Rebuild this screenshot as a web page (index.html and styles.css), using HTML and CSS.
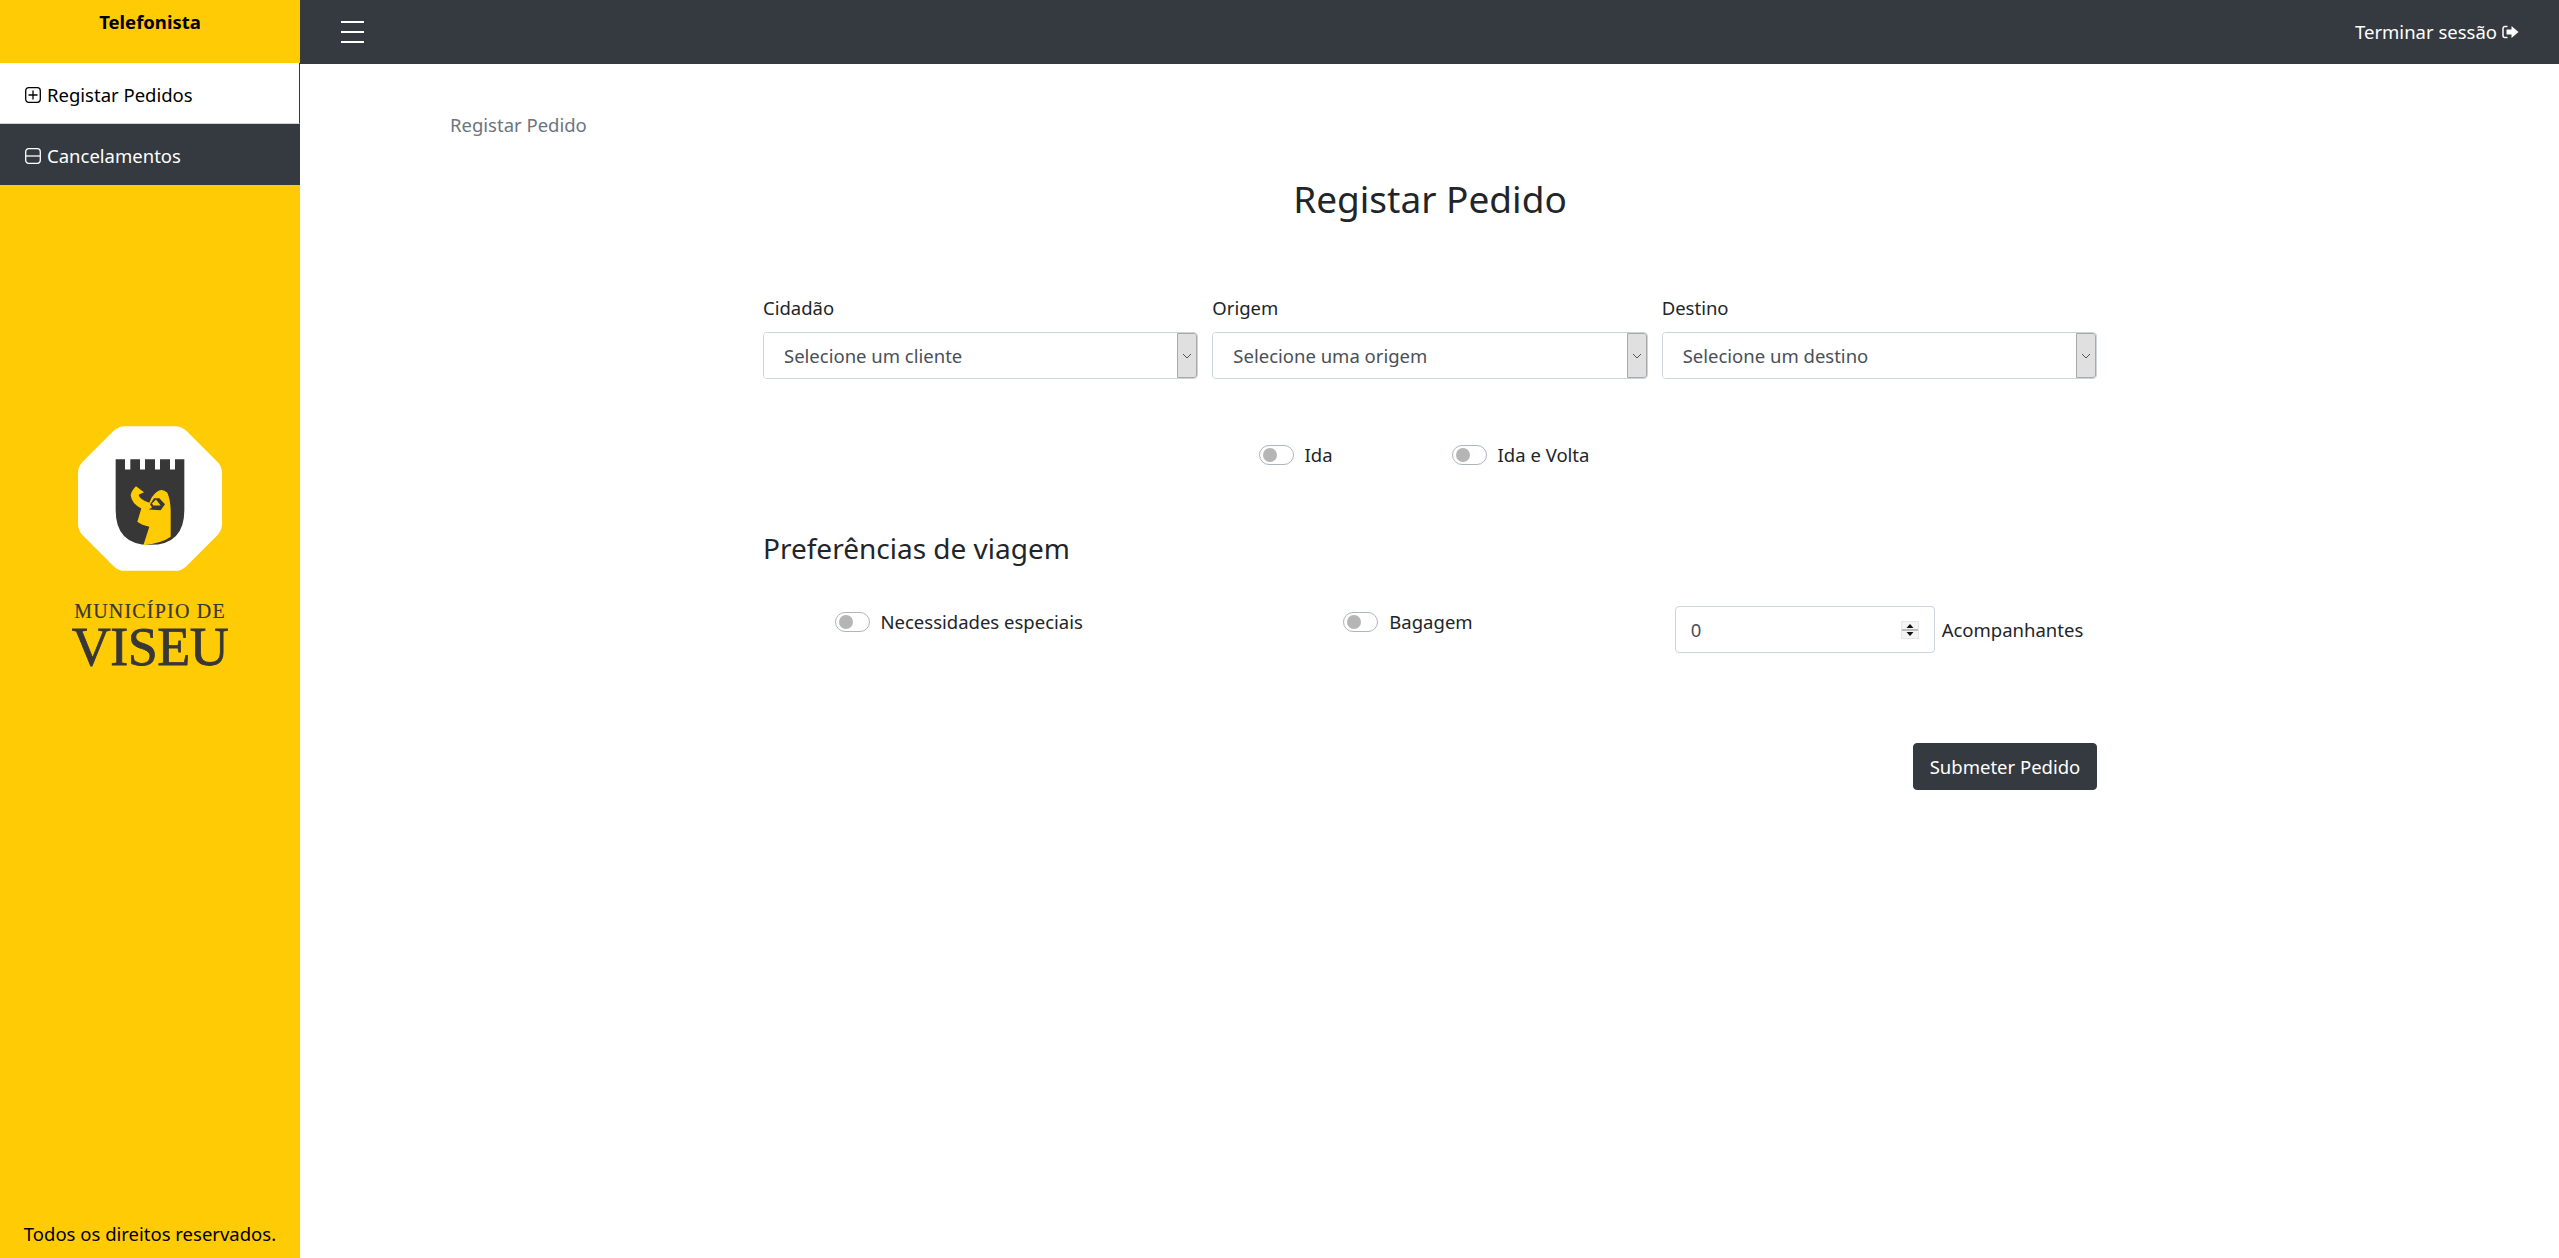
FILE: index.html
```html
<!DOCTYPE html>
<html lang="pt">
<head>
    <meta charset="UTF-8">
    <meta name="viewport" content="width=device-width, initial-scale=1.0">
    <title>Registar Pedido</title>
    <link rel="stylesheet" href="styles.css">
</head>
<body>
    <aside class="sidebar">
        <div class="sidebar-title">Telefonista</div>
        <a class="side-link active" href="#">
            <svg class="side-icon" viewBox="0 0 16 16"><rect x=".7" y=".7" width="14.600" height="14.600" rx="3" fill="none" stroke="currentColor" stroke-width="1.300"/><path d="M8 3.500v9M3.500 8h9" stroke="currentColor" stroke-width="1.300"/></svg>
            Registar Pedidos
        </a>
        <a class="side-link" href="#">
            <svg class="side-icon" viewBox="0 0 16 16"><rect x=".7" y=".7" width="14.600" height="14.600" rx="3" fill="none" stroke="currentColor" stroke-width="1.300"/><path d="M1 8h14" stroke="currentColor" stroke-width="1.300"/></svg>
            Cancelamentos
        </a>
        <div class="brand">
            <svg class="brand-mark" viewBox="84 48 432 434">
                <path fill="#fff" d="M225 48H375Q395 48 409 62L502 155Q516 169 516 189V341Q516 361 502 375L409 468Q395 482 375 482H225Q205 482 191 468L98 375Q84 361 84 341V189Q84 169 98 155L191 62Q205 48 225 48Z"/>
                <path fill="#373737" d="M197 147H225V178H241V147H270V178H285V147H315V178H330V147H360V178H375V147H403V300Q403 404 300 404Q197 404 197 300Z"/>
                <path fill="#ffcb05" d="M258 228L282 246L266 254Q268 268 298 278L305 262Q330 225 352 248Q362 270 362 305V380Q335 400 280 405L298 350Q275 345 262 335L274 295Q245 280 242 255Q245 240 258 228Z"/>
                <path fill="#373737" d="M312 264L300 282L306 292L296 298L332 300L345 282L328 264Z"/>
                <path fill="#ffcb05" d="M318 268L332 286L310 286L306 280Z"/>
            </svg>
            <div class="brand-small">MUNICÍPIO DE</div>
            <div class="brand-big">VISEU</div>
        </div>
        <div class="side-footer">Todos os direitos reservados.</div>
    </aside>

    <div class="page">
        <nav class="topbar">
            <button class="menu-btn" aria-label="Menu"><span></span><span></span><span></span></button>
            <a class="logout" href="#">Terminar sessão
                <svg class="logout-icon" viewBox="0 0 17 14"><path d="M5.500 1.500H3A2 2 0 0 0 1 3.500v7a2 2 0 0 0 2 2h2.500" fill="none" stroke="currentColor" stroke-width="1.500"/><path d="M9.500 1l7 6-7 6V9.500H4.500v-5h5z" fill="currentColor"/></svg>
            </a>
        </nav>

        <main class="content">
            <div class="breadcrumb">Registar Pedido</div>
            <form class="order-form">
                <h2 class="form-title">Registar Pedido</h2>

                <div class="select-row">
                    <div class="field">
                        <label for="cidadao">Cidadão</label>
                        <div class="select-box">
                            <select id="cidadao"><option>Selecione um cliente</option></select>
                            <span class="select-arrow"><svg viewBox="0 0 10 6"><path d="M1 1l4 4 4-4" fill="none" stroke="#555" stroke-width="1"/></svg></span>
                        </div>
                    </div>
                    <div class="field">
                        <label for="origem">Origem</label>
                        <div class="select-box">
                            <select id="origem"><option>Selecione uma origem</option></select>
                            <span class="select-arrow"><svg viewBox="0 0 10 6"><path d="M1 1l4 4 4-4" fill="none" stroke="#555" stroke-width="1"/></svg></span>
                        </div>
                    </div>
                    <div class="field">
                        <label for="destino">Destino</label>
                        <div class="select-box">
                            <select id="destino"><option>Selecione um destino</option></select>
                            <span class="select-arrow"><svg viewBox="0 0 10 6"><path d="M1 1l4 4 4-4" fill="none" stroke="#555" stroke-width="1"/></svg></span>
                        </div>
                    </div>
                </div>

                <div class="trip-row">
                    <label class="toggle toggle-ida"><span class="switch"></span>Ida</label>
                    <label class="toggle"><span class="switch"></span>Ida e Volta</label>
                </div>

                <h3 class="prefs-title">Preferências de viagem</h3>

                <div class="prefs-row">
                    <div class="pref-cell"><label class="toggle"><span class="switch"></span>Necessidades especiais</label></div>
                    <div class="pref-cell"><label class="toggle"><span class="switch"></span>Bagagem</label></div>
                    <div class="pref-number">
                        <div class="number-box">
                            <input type="number" value="0" min="0" id="acompanhantes">
                            <span class="spinner">
                                <svg viewBox="0 0 18 18">
                                    <rect width="18" height="18" fill="#e6e6e6"/>
                                    <rect x="1" y="1" width="16" height="16" fill="#f4f4f4"/>
                                    <path d="M1 9h16" stroke="#bbb" stroke-width="2"/>
                                    <path d="M9 3l3.500 4h-7zM9 15l3.500-4h-7z" fill="#111"/>
                                </svg>
                            </span>
                        </div>
                        <label for="acompanhantes">Acompanhantes</label>
                    </div>
                </div>

                <div class="form-actions">
                    <button type="button" class="submit-btn">Submeter Pedido</button>
                </div>
            </form>
        </main>
    </div>
</body>
</html>
```

FILE: styles.css
```css
* {
    box-sizing: border-box;
}

html, body {
    height: 100%;
}

body {
    margin: 0;
    display: flex;
    min-height: 1258px;
    font-family: "Noto Sans", "Open Sans", sans-serif;
    font-size: 18.5px;
    line-height: 24px;
    color: #212529;
    background-color: #fff;
    overflow: hidden;
}

/* Sidebar */
.sidebar {
    width: 300px;
    flex-shrink: 0;
    display: flex;
    flex-direction: column;
    background-color: #ffcb05;
}

.sidebar-title {
    height: 63px;
    padding-top: 10px;
    text-align: center;
    font-weight: bold;
    color: #000;
}

.side-link {
    display: flex;
    align-items: center;
    gap: 6px;
    height: 61px;
    padding: 2px 0 0 25px;
    color: #fff;
    text-decoration: none;
    background-color: #343a40;
}

.side-link.active {
    height: 61px;
    padding-top: 3px;
    color: #000;
    background-color: #fff;
    border-right: 1px solid #343a40;
    border-bottom: 1px solid #ced4da;
}

.side-icon {
    width: 16px;
    height: 16px;
}

.brand {
    margin-top: 241px;
    display: flex;
    flex-direction: column;
    align-items: center;
    color: #373737;
    font-family: "Liberation Serif", serif;
}

.brand-mark {
    width: 144px;
    height: 145px;
}

.brand-small {
    margin-top: 28px;
    font-size: 20px;
    line-height: 24px;
    letter-spacing: 1.2px;
    -webkit-text-stroke: 0.2px #373737;
}

.brand-big {
    font-size: 54px;
    line-height: 48px;
    letter-spacing: -0.5px;
    -webkit-text-stroke: 0.8px #373737;
}

.side-footer {
    margin-top: auto;
    padding-bottom: 12px;
    text-align: center;
    color: #000;
}

/* Top bar */
.page {
    flex: 1;
    display: flex;
    flex-direction: column;
}

.topbar {
    height: 64px;
    display: flex;
    align-items: center;
    justify-content: space-between;
    padding: 0 40px 0 41px;
    background-color: #343a40;
}

.menu-btn {
    display: flex;
    flex-direction: column;
    gap: 8px;
    width: 23px;
    padding: 0;
    border: none;
    background: none;
}

.menu-btn span {
    height: 2px;
    background-color: #fff;
}

.logout {
    display: flex;
    align-items: center;
    gap: 5px;
    color: #fff;
    text-decoration: none;
}

.logout-icon {
    width: 17px;
    height: 14px;
}

/* Content */
.content {
    padding: 49px 150px 0;
}

.breadcrumb {
    color: #6c757d;
}

.order-form {
    width: 1334px;
    margin-left: 313px;
}

.form-title {
    margin: 38px 0 0;
    text-align: center;
    font-size: 37px;
    font-weight: 400;
    line-height: 48px;
}

.select-row {
    display: grid;
    grid-template-columns: repeat(3, 1fr);
    gap: 14px;
    margin-top: 73px;
}

.field label {
    display: block;
    margin-bottom: 12px;
}

.select-box {
    display: flex;
    height: 47px;
    border: 1px solid #ced4da;
    border-radius: 4px;
    overflow: hidden;
}

.select-box select {
    flex: 1;
    min-width: 0;
    padding: 0 0 0 20px;
    border: none;
    background: #fff;
    color: #495057;
    font: inherit;
    appearance: none;
    outline: none;
}

.select-arrow {
    width: 20px;
    display: flex;
    align-items: center;
    justify-content: center;
    background-color: #e0e0e0;
    border: 1px solid #a9a9a9;
    border-radius: 0 3px 3px 0;
}

.select-arrow svg {
    width: 10px;
    height: 6px;
}

.trip-row {
    display: flex;
    justify-content: center;
    margin-top: 64px;
    padding-right: 12px;
}

.toggle {
    display: flex;
    align-items: center;
    gap: 11px;
}

.toggle-ida {
    margin-right: 119px;
}

.switch {
    width: 35px;
    height: 20px;
    display: flex;
    align-items: center;
    padding: 0 3px;
    border: 1px solid #adb5bd;
    border-radius: 10px;
}

.switch::before {
    content: "";
    display: block;
    width: 14px;
    height: 14px;
    border-radius: 50%;
    background-color: #b5b5b5;
}

.prefs-title {
    margin: 64px 0 0;
    font-size: 28px;
    font-weight: 400;
    line-height: 34px;
}

.prefs-row {
    display: grid;
    grid-template-columns: 1fr 1fr 1fr;
    gap: 14px;
    margin-top: 41px;
}

.pref-cell {
    display: flex;
    justify-content: center;
    align-items: flex-start;
    padding: 4px 44px 0 0;
}

.pref-number {
    display: flex;
    align-items: center;
    gap: 7px;
    padding-left: 13px;
}

.number-box {
    width: 260px;
    height: 47px;
    display: flex;
    align-items: center;
    padding: 0 15px;
    border: 1px solid #ced4da;
    border-radius: 4px;
}

.number-box input {
    flex: 1;
    min-width: 0;
    padding: 0;
    border: none;
    color: #495057;
    font: inherit;
    outline: none;
    appearance: textfield;
}

.number-box input::-webkit-inner-spin-button {
    appearance: none;
}

.spinner {
    display: flex;
}

.spinner svg {
    width: 18px;
    height: 18px;
}

.form-actions {
    display: flex;
    justify-content: flex-end;
    margin-top: 90px;
}

.submit-btn {
    width: 184px;
    height: 47px;
    border: 1px solid #343a40;
    border-radius: 4px;
    color: #fff;
    font: inherit;
    background-color: #343a40;
}
```
